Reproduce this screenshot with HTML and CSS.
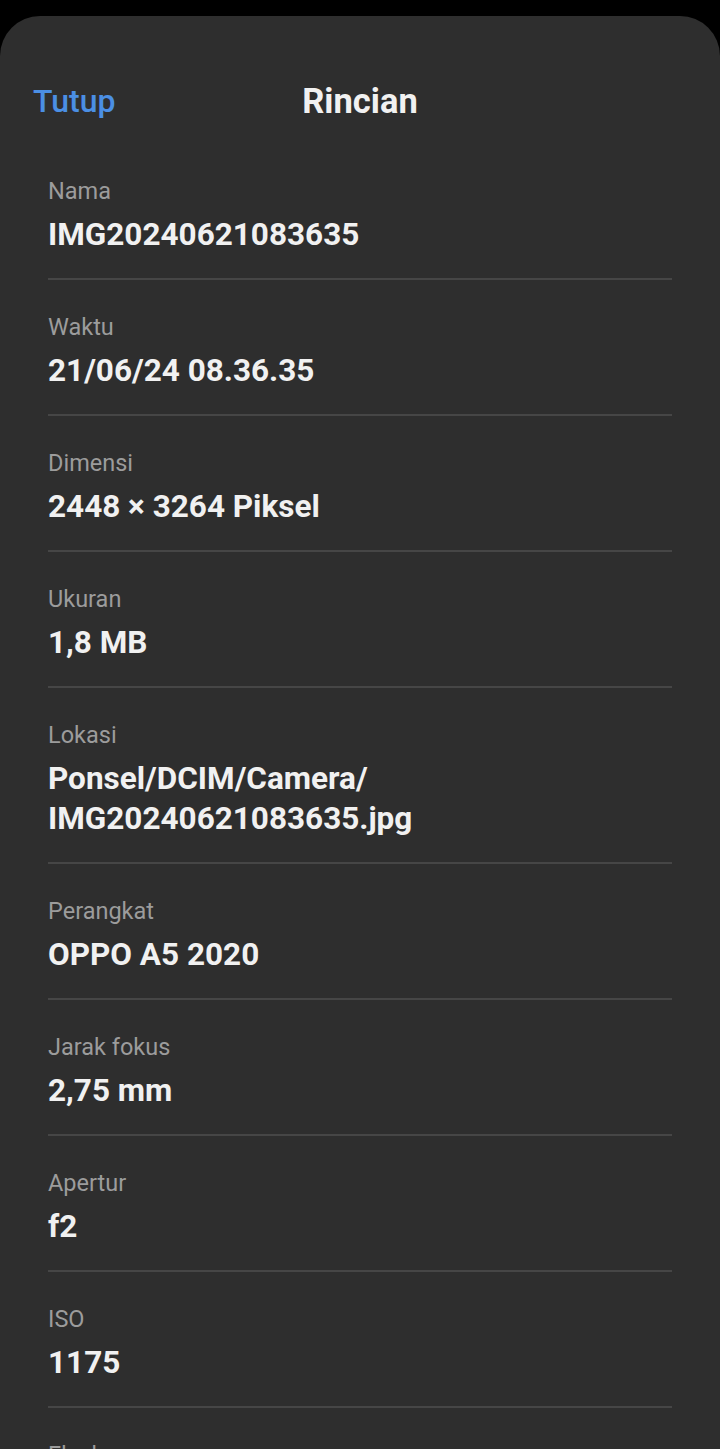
FILE: index.html
```html
<!DOCTYPE html>
<html lang="id">
<head>
<meta charset="utf-8">
<title>Rincian</title>
<link rel="stylesheet" href="styles.css">
</head>
<body>
<div class="sheet">
  <header class="header">
    <span class="close">Tutup</span>
    <h1 class="title">Rincian</h1>
  </header>
  <div class="list">
    <div class="row"><div class="label">Nama</div><div class="value">IMG20240621083635</div></div>
    <div class="row"><div class="label">Waktu</div><div class="value">21/06/24 08.36.35</div></div>
    <div class="row"><div class="label">Dimensi</div><div class="value">2448 × 3264 Piksel</div></div>
    <div class="row"><div class="label">Ukuran</div><div class="value">1,8 MB</div></div>
    <div class="row"><div class="label">Lokasi</div><div class="value">Ponsel/DCIM/Camera/<br>IMG20240621083635.jpg</div></div>
    <div class="row"><div class="label">Perangkat</div><div class="value">OPPO A5 2020</div></div>
    <div class="row"><div class="label">Jarak fokus</div><div class="value">2,75 mm</div></div>
    <div class="row"><div class="label">Apertur</div><div class="value">f2</div></div>
    <div class="row"><div class="label">ISO</div><div class="value">1175</div></div>
    <div class="row"><div class="label">Flash</div><div class="value">Tidak ada flash</div></div>
  </div>
</div>
</body>
</html>
```

FILE: styles.css
```css
html, body {
  margin: 0;
  padding: 0;
  background: #000;
}
body {
  font-family: Roboto, "Noto Sans", sans-serif;
  height: 1449px;
  overflow: hidden;
}
.sheet {
  margin-top: 16px;
  background: #2e2e2e;
  border-radius: 40px 40px 0 0;
  min-height: 1433px;
}
.header {
  position: relative;
  height: 128px;
  box-sizing: border-box;
  padding: 65px 33px 0;
}
.close {
  display: block;
  font-size: 32px;
  line-height: 40px;
  font-weight: 500;
  color: #4b8fe4;
}
.title {
  position: absolute;
  left: 0;
  right: 0;
  top: 65px;
  margin: 0;
  text-align: center;
  font-size: 34.5px;
  line-height: 40px;
  font-weight: 700;
  color: #f1f1f1;
}
.list {
  padding: 0 48px;
}
.row {
  padding: 31.5px 0 23px;
  border-bottom: 2px solid #464646;
}
.label {
  font-size: 23.5px;
  line-height: 30px;
  color: #9c9c9c;
  margin-bottom: 9.5px;
}
.value {
  font-size: 31.5px;
  line-height: 40px;
  font-weight: 700;
  color: #f1f1f1;
}
```
